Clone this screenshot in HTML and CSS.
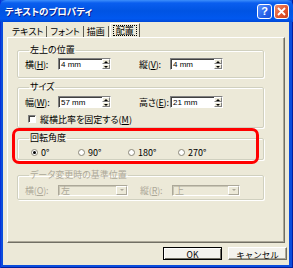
FILE: index.html
```html
<!DOCTYPE html>
<html lang="ja">
<head>
    <meta charset="UTF-8">
    <title>テキストのプロパティ</title>
    <link rel="stylesheet" href="styles.css">
</head>
<body>
    <div class="window">
        <div class="titlebar">
            <span class="title">テキストのプロパティ</span>
            <div class="caption-buttons">
                <span class="cap-btn help">?</span>
                <span class="cap-btn close">
                    <svg width="9" height="9" viewBox="0 0 9 9"><path d="M1 1L8 8M8 1L1 8" stroke="#fff" stroke-width="1.8"/></svg>
                </span>
            </div>
        </div>
        <div class="client">
            <div class="tabs">
                <span class="tab">テキスト</span>
                <span class="tab">フォント</span>
                <span class="tab">描画</span>
                <span class="tab active"><span class="focus">配置</span></span>
            </div>
            <div class="panel">
                <fieldset class="group g-pos">
                    <legend>左上の位置</legend>
                    <div class="row">
                        <label class="lbl">横(<u>H</u>):</label>
                        <div class="spin"><span class="val">4 mm</span><span class="arrows"><i class="up"></i><i class="down"></i></span></div>
                        <label class="lbl lbl-r">縦(<u>V</u>):</label>
                        <div class="spin"><span class="val">4 mm</span><span class="arrows"><i class="up"></i><i class="down"></i></span></div>
                    </div>
                </fieldset>

                <fieldset class="group g-size">
                    <legend>サイズ</legend>
                    <div class="row">
                        <label class="lbl">幅(<u>W</u>):</label>
                        <div class="spin"><span class="val">57 mm</span><span class="arrows"><i class="up"></i><i class="down"></i></span></div>
                        <label class="lbl lbl-r">高さ(<u>E</u>):</label>
                        <div class="spin"><span class="val">21 mm</span><span class="arrows"><i class="up"></i><i class="down"></i></span></div>
                    </div>
                    <div class="check-row">
                        <span class="checkbox"></span>
                        <span>縦横比率を固定する(<u>M</u>)</span>
                    </div>
                </fieldset>

                <div class="highlight">
                    <fieldset class="group g-rot">
                        <legend>回転角度</legend>
                        <div class="radios">
                            <span class="radio-item"><span class="radio checked"></span><span>0°</span></span>
                            <span class="radio-item"><span class="radio"></span><span>90°</span></span>
                            <span class="radio-item"><span class="radio"></span><span>180°</span></span>
                            <span class="radio-item"><span class="radio"></span><span>270°</span></span>
                        </div>
                    </fieldset>
                </div>

                <fieldset class="group g-base disabled">
                    <legend>データ変更時の基準位置</legend>
                    <div class="row">
                        <label class="lbl">横(<u>O</u>):</label>
                        <div class="combo c-left"><span class="val">左</span><span class="drop"><i></i></span></div>
                        <label class="lbl lbl-r2">縦(<u>R</u>):</label>
                        <div class="combo c-right"><span class="val">上</span><span class="drop"><i></i></span></div>
                    </div>
                </fieldset>
            </div>
            <div class="buttons">
                <button class="btn default">OK</button>
                <button class="btn">キャンセル</button>
            </div>
        </div>
    </div>
</body>
</html>
```

FILE: styles.css
```css
body {
    margin: 0;
    font-family: "Noto Sans CJK JP", "Liberation Sans", sans-serif;
    font-size: 9px;
    font-feature-settings: "palt";
    color: #000;
}
.window {
    width: 293px;
    height: 268px;
    display: flex;
    flex-direction: column;
    background: #0b4ddc;
    box-shadow: inset 1px 0 #0831d9, inset -1px -1px #001ea0;
}
.titlebar {
    height: 22px;
    display: flex;
    align-items: center;
    padding: 0 4px 0 5px;
    background: linear-gradient(#3d8ffb 0, #0a5eef 3px, #0054e3 50%, #0158ef 85%, #0048d6 100%);
    border-radius: 6px 6px 0 0;
}
.title {
    flex: 1;
    color: #fff;
    font-weight: bold;
    font-size: 9.5px;
    text-shadow: 1px 1px #0a1e8c;
}
.caption-buttons {
    display: flex;
    gap: 2px;
}
.cap-btn {
    width: 13px;
    height: 13px;
    border: 1px solid #fff;
    border-radius: 3px;
    display: flex;
    align-items: center;
    justify-content: center;
    color: #fff;
    font-family: "Liberation Sans", sans-serif;
    font-weight: bold;
    font-size: 11px;
}
.help {
    background: linear-gradient(135deg, #5a93ff, #2662ea 60%, #1b4fd6);
}
.close {
    background: linear-gradient(135deg, #f08a68, #e0542e 60%, #c9401a);
}
.client {
    flex: 1;
    margin: 0 4px 3px 3px;
    background: #ece9d8;
    display: flex;
    flex-direction: column;
}
.tabs {
    display: flex;
    align-items: flex-end;
    height: 15px;
    padding-left: 6px;
}
.tab {
    height: 11px;
    line-height: 11px;
    padding: 0 3px 0 3px;
    border-right: 1px solid #5e5c52;
}
.tab.active {
    height: 12px;
    margin-left: 1px;
    padding: 1px 2px 0 2px;
    border-left: 1px solid #fff;
    border-top: 1px solid #fff;
    border-right: 1px solid #5e5c52;
}
.focus {
    display: block;
    line-height: 9px;
    padding: 0 2px;
    border: 1px dotted #000;
}
.panel {
    height: 204px;
    margin: 0 4px 0 4px;
    border: 1px solid;
    border-color: #fff #716f64 #716f64 #fff;
    box-shadow: inset -1px -1px #aca899;
    padding: 0 0 0 9px;
}
.group {
    width: 238px;
    margin: 0;
    padding: 0 0 0 7px;
    border: 1px solid #d0d0bf;
    border-radius: 2px;
    box-shadow: 1px 1px #fff, inset 1px 1px #fff;
}
.group legend {
    margin-left: 4px;
    padding: 0 1px;
    line-height: 10px;
}
.g-pos {
    margin-top: 7px;
    padding-top: 3px;
    padding-bottom: 7px;
}
.g-size {
    margin-top: 4px;
    padding-top: 4px;
    padding-bottom: 2px;
}
.g-rot {
    padding-top: 3px;
    padding-bottom: 1px;
}
.g-base {
    margin-top: 10px;
    padding-top: 4px;
    padding-bottom: 3px;
}
.row {
    display: flex;
    align-items: center;
    height: 12px;
}
.lbl {
    width: 33px;
    flex-shrink: 0;
    white-space: nowrap;
    letter-spacing: -0.2px;
}
.lbl-r {
    width: 31px;
    margin-left: 28px;
}
.lbl-r2 {
    width: 32px;
    margin-left: 12px;
}
u {
    text-decoration-thickness: 1px;
    text-underline-offset: 1px;
}
.spin {
    width: 53px;
    height: 12px;
    flex-shrink: 0;
    box-sizing: border-box;
    display: flex;
    background: #fff;
    border: 1px solid;
    border-color: #808080 #fff #fff #808080;
    box-shadow: inset 1px 1px #404040;
}
.spin .val {
    flex: 1;
    padding: 1px 0 0 2px;
    line-height: 9px;
    font-family: "Liberation Sans", sans-serif;
    font-size: 8px;
}
.arrows {
    width: 8px;
    display: flex;
    flex-direction: column;
}
.arrows i {
    flex: 1;
    background: #ece9d8;
    border: 1px solid;
    border-color: #fff #808080 #808080 #fff;
    display: flex;
    align-items: center;
    justify-content: center;
}
.arrows i::after {
    content: "";
    border-left: 2px solid transparent;
    border-right: 2px solid transparent;
}
.arrows .up::after {
    border-bottom: 2px solid #000;
}
.arrows .down::after {
    border-top: 2px solid #000;
}
.check-row {
    display: flex;
    align-items: center;
    gap: 4px;
    height: 12px;
    margin-top: 5px;
    padding-left: 3px;
    white-space: nowrap;
}
.checkbox {
    width: 8px;
    height: 8px;
    box-sizing: border-box;
    background: #fff;
    border: 1px solid;
    border-color: #808080 #fff #fff #808080;
    box-shadow: inset 1px 1px #404040;
}
.highlight {
    position: relative;
    margin-top: 5px;
}
.highlight::after {
    content: "";
    position: absolute;
    top: -5px;
    left: -5px;
    width: 241px;
    height: 30px;
    border: 3px solid #ff0000;
    border-radius: 7px;
}
.radios {
    display: grid;
    grid-template-columns: 47px 50px 50px 50px;
    padding-left: 6px;
    height: 12px;
    align-items: center;
}
.radio-item {
    display: flex;
    align-items: center;
    gap: 3px;
}
.radio {
    width: 7px;
    height: 7px;
    box-sizing: border-box;
    border-radius: 50%;
    background: #fff;
    border: 1px solid #8a8778;
    display: flex;
    align-items: center;
    justify-content: center;
}
.radio.checked::after {
    content: "";
    width: 3px;
    height: 3px;
    border-radius: 50%;
    background: #000;
}
.disabled,
.disabled legend {
    color: #aca899;
}
.combo {
    height: 11px;
    box-sizing: border-box;
    display: flex;
    border: 1px solid;
    border-color: #aca899 #fff #fff #aca899;
    box-shadow: inset 1px 1px #c9c6b5;
}
.c-left {
    width: 70px;
}
.c-right {
    width: 68px;
}
.combo .val {
    flex: 1;
    padding-left: 2px;
    line-height: 9px;
}
.drop {
    width: 9px;
    border: 1px solid;
    border-color: #fff #aca899 #aca899 #fff;
    display: flex;
    align-items: center;
    justify-content: center;
}
.drop i {
    border-left: 2px solid transparent;
    border-right: 2px solid transparent;
    border-top: 2px solid #aca899;
}
.buttons {
    display: flex;
    justify-content: flex-end;
    gap: 6px;
    margin-top: 4px;
    padding-right: 2px;
}
.btn {
    width: 59px;
    height: 13px;
    padding: 0;
    font-family: inherit;
    font-size: 8.5px;
    line-height: 10px;
    background: #f3f2ec;
    border: 1px solid;
    border-color: #fff #716f64 #716f64 #fff;
    box-shadow: inset -1px -1px #aca899;
}
.btn.default {
    border: 1px solid #000;
    box-shadow: inset 1px 1px #fff, inset -1px -1px #716f64;
}
```
